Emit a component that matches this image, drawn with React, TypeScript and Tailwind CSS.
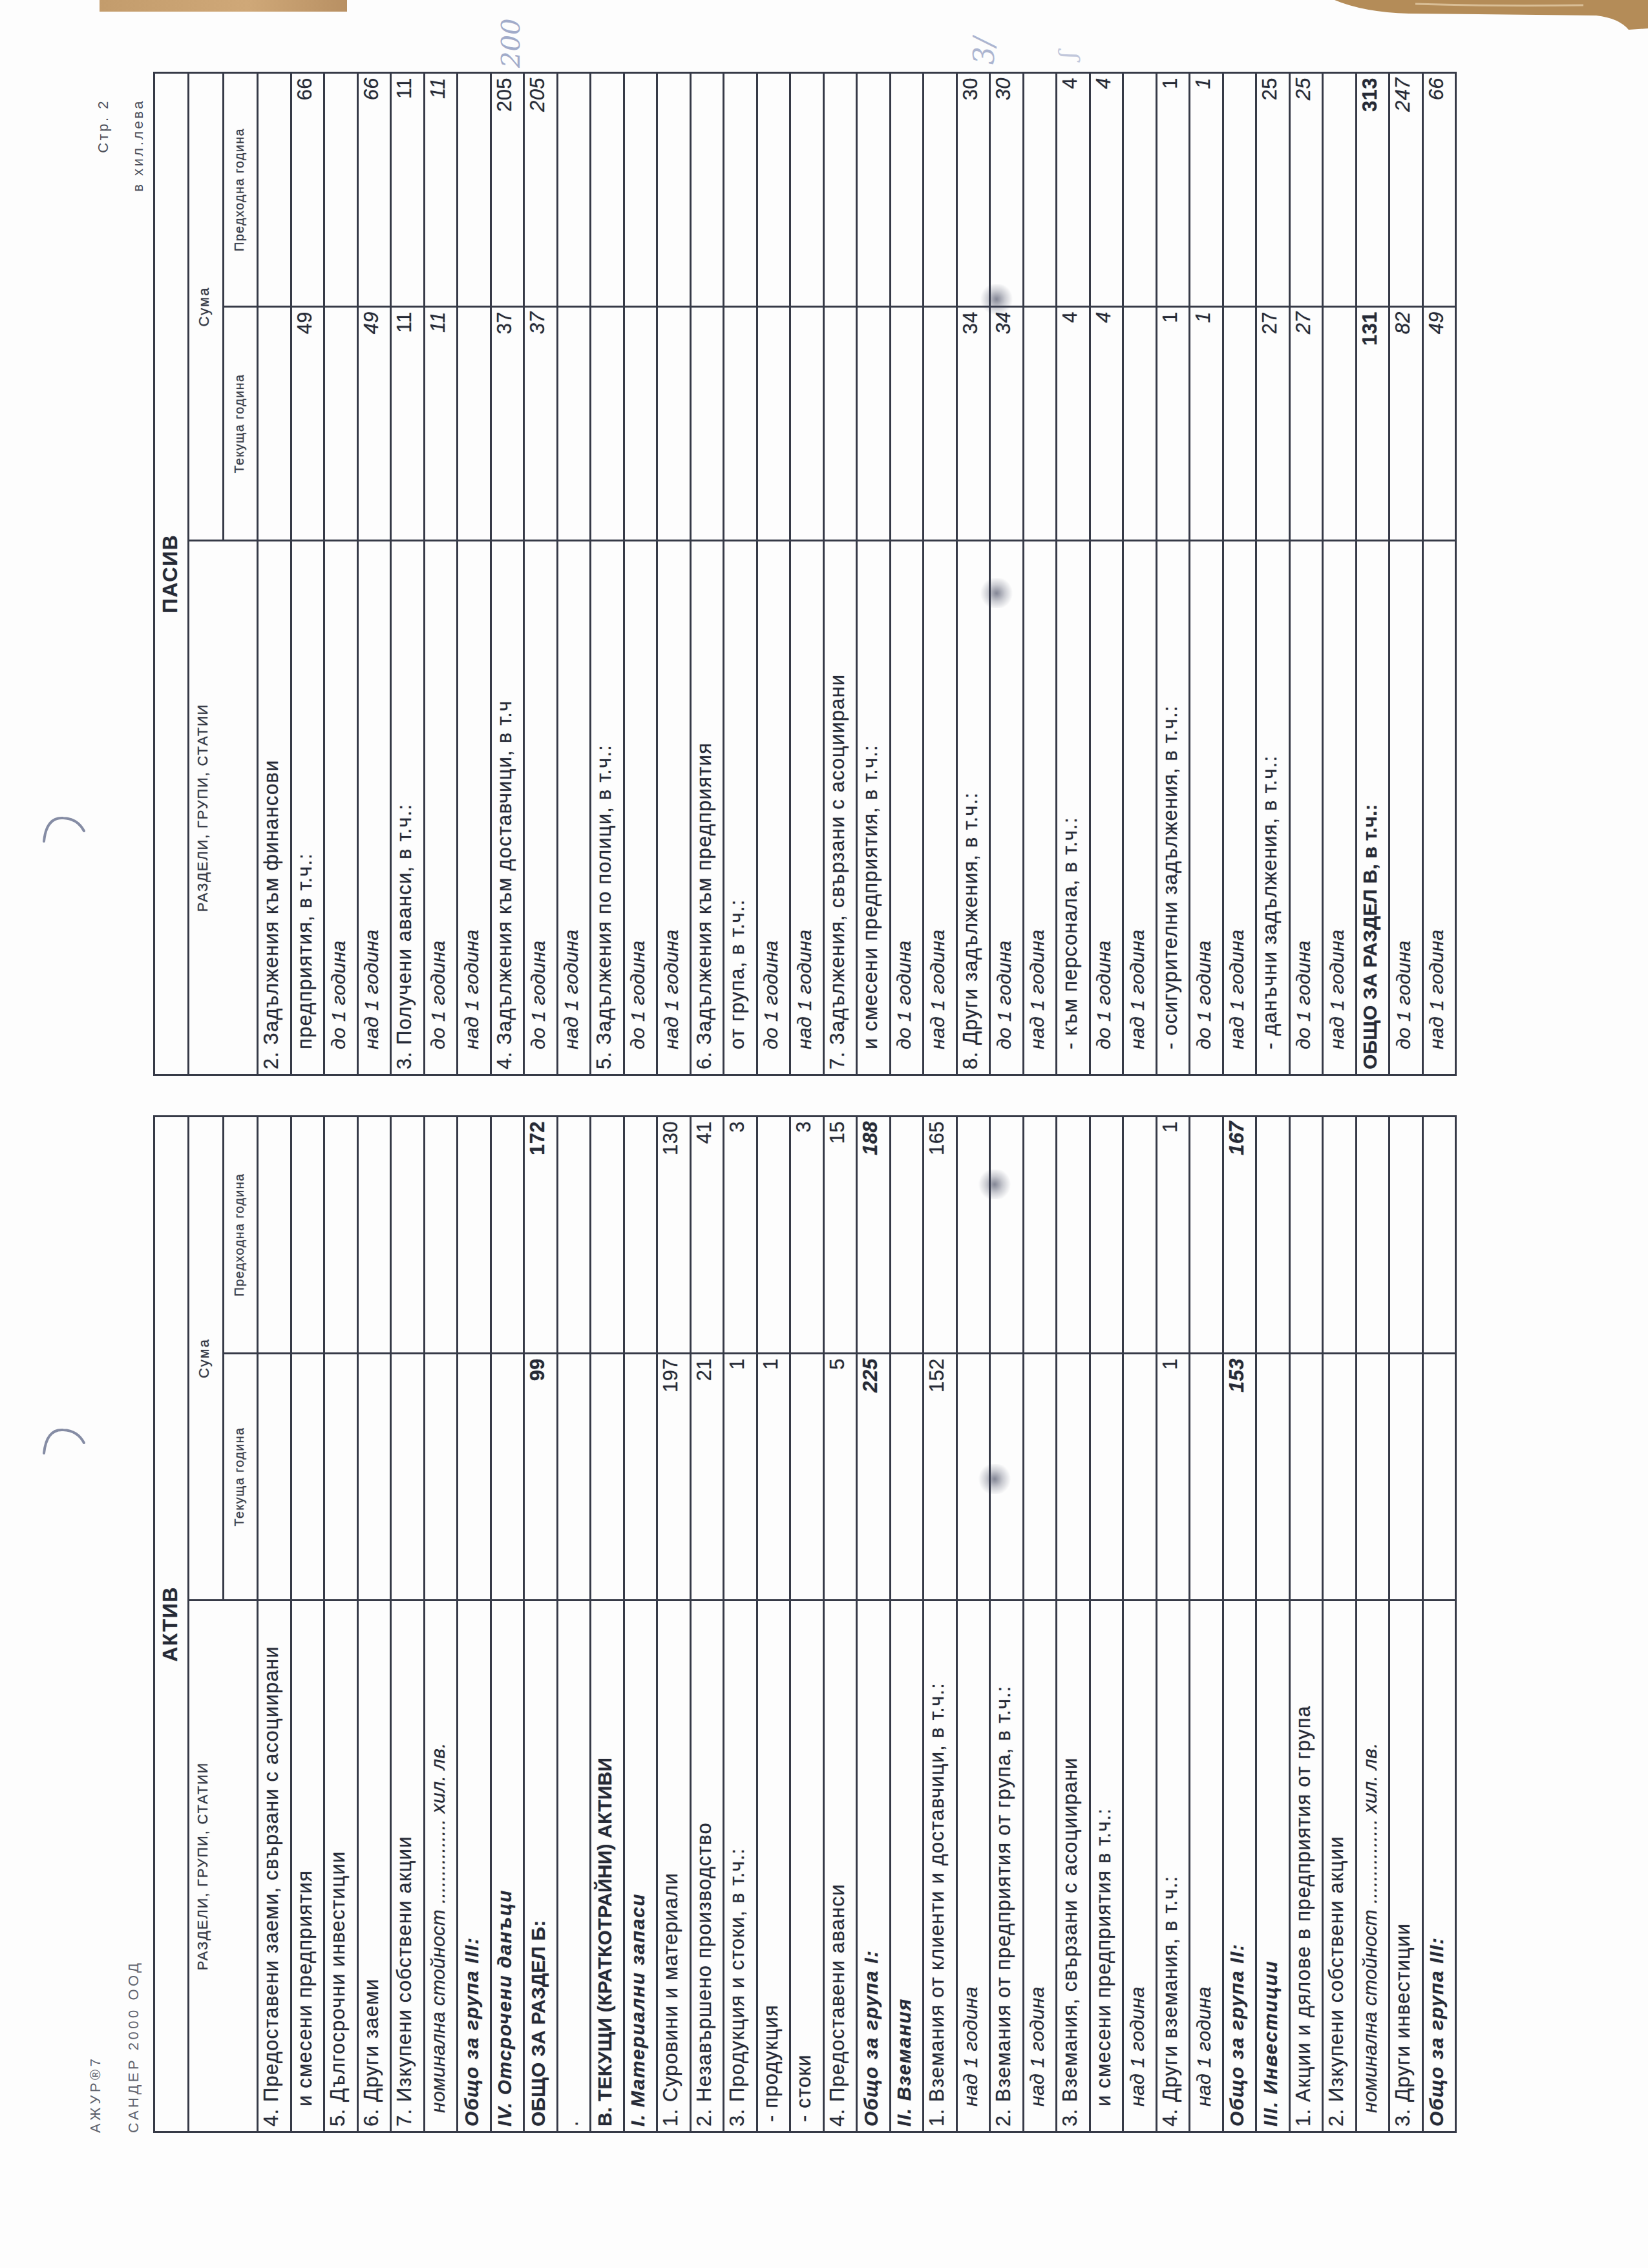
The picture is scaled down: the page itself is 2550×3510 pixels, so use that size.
import React from 'react';

type Style = 'n' | 'i' | 'b' | 'bi';
type Row = { t: string; s?: Style; pad?: string; c?: string; p?: string };

const LINE = 'border-[#363a47]';

const TXT: Record<Style, string> = {
    n: 'text-[31px] font-normal not-italic tracking-[1.2px]',
    i: 'text-[30px] font-normal italic tracking-[0.4px]',
    b: 'text-[30px] font-bold not-italic tracking-[0.2px]',
    bi: 'text-[30px] font-bold italic tracking-[1.6px]',
};

const NUM: Record<Style, string> = {
    n: 'font-normal not-italic',
    i: 'font-normal italic',
    b: 'font-bold not-italic',
    bi: 'font-bold italic',
};

const IN = 'pl-[38px]';
const NOM = 'pl-[28px]';
const DASH = 'pl-[14px]';
const NOMINAL = 'номинална стойност ............... хил. лв.';

const aktiv: Row[] = [
    { t: '4. Предоставени заеми, свързани с асоциирани' },
    { t: 'и смесени предприятия', pad: IN },
    { t: '5. Дългосрочни инвестиции' },
    { t: '6. Други заеми' },
    { t: '7. Изкупени собствени акции' },
    { t: NOMINAL, s: 'i', pad: NOM },
    { t: 'Общо за група III:', s: 'bi' },
    { t: 'IV. Отсрочени данъци', s: 'bi' },
    { t: 'ОБЩО ЗА РАЗДЕЛ Б:', s: 'b', c: '99', p: '172' },
    { t: '.' },
    { t: 'В. ТЕКУЩИ (КРАТКОТРАЙНИ) АКТИВИ', s: 'b' },
    { t: 'I. Материални запаси', s: 'bi' },
    { t: '1. Суровини и материали', c: '197', p: '130' },
    { t: '2. Незавършено производство', c: '21', p: '41' },
    { t: '3. Продукция и стоки, в т.ч.:', c: '1', p: '3' },
    { t: '- продукция', pad: DASH, c: '1' },
    { t: '- стоки', pad: DASH, p: '3' },
    { t: '4. Предоставени аванси', c: '5', p: '15' },
    { t: 'Общо за група I:', s: 'bi', c: '225', p: '188' },
    { t: 'II. Вземания', s: 'bi' },
    { t: '1. Вземания от клиенти и доставчици, в т.ч.:', c: '152', p: '165' },
    { t: 'над 1 година', s: 'i', pad: IN },
    { t: '2. Вземания от предприятия от група, в т.ч.:' },
    { t: 'над 1 година', s: 'i', pad: IN },
    { t: '3. Вземания, свързани с асоциирани' },
    { t: 'и смесени предприятия в т.ч.:', pad: IN },
    { t: 'над 1 година', s: 'i', pad: IN },
    { t: '4. Други вземания, в т.ч.:', c: '1', p: '1' },
    { t: 'над 1 година', s: 'i', pad: IN },
    { t: 'Общо за група II:', s: 'bi', c: '153', p: '167' },
    { t: 'III. Инвестиции', s: 'bi' },
    { t: '1. Акции и дялове в предприятия от група' },
    { t: '2. Изкупени собствени акции' },
    { t: NOMINAL, s: 'i', pad: NOM },
    { t: '3. Други инвестиции' },
    { t: 'Общо за група III:', s: 'bi' },
];

const pasiv: Row[] = [
    { t: '2. Задължения към финансови' },
    { t: 'предприятия, в т.ч.:', pad: IN, c: '49', p: '66' },
    { t: 'до 1 година', s: 'i', pad: IN },
    { t: 'над 1 година', s: 'i', pad: IN, c: '49', p: '66' },
    { t: '3. Получени аванси, в т.ч.:', c: '11', p: '11' },
    { t: 'до 1 година', s: 'i', pad: IN, c: '11', p: '11' },
    { t: 'над 1 година', s: 'i', pad: IN },
    { t: '4. Задължения към доставчици, в т.ч', c: '37', p: '205' },
    { t: 'до 1 година', s: 'i', pad: IN, c: '37', p: '205' },
    { t: 'над 1 година', s: 'i', pad: IN },
    { t: '5. Задължения по полици, в т.ч.:' },
    { t: 'до 1 година', s: 'i', pad: IN },
    { t: 'над 1 година', s: 'i', pad: IN },
    { t: '6. Задължения към предприятия' },
    { t: 'от група, в т.ч.:', pad: IN },
    { t: 'до 1 година', s: 'i', pad: IN },
    { t: 'над 1 година', s: 'i', pad: IN },
    { t: '7. Задължения, свързани с асоциирани' },
    { t: 'и смесени предприятия, в т.ч.:', pad: IN },
    { t: 'до 1 година', s: 'i', pad: IN },
    { t: 'над 1 година', s: 'i', pad: IN },
    { t: '8. Други задължения, в т.ч.:', c: '34', p: '30' },
    { t: 'до 1 година', s: 'i', pad: IN, c: '34', p: '30' },
    { t: 'над 1 година', s: 'i', pad: IN },
    { t: '- към персонала, в т.ч.:', pad: IN, c: '4', p: '4' },
    { t: 'до 1 година', s: 'i', pad: IN, c: '4', p: '4' },
    { t: 'над 1 година', s: 'i', pad: IN },
    { t: '- осигурителни задължения, в т.ч.:', pad: IN, c: '1', p: '1' },
    { t: 'до 1 година', s: 'i', pad: IN, c: '1', p: '1' },
    { t: 'над 1 година', s: 'i', pad: IN },
    { t: '- данъчни задължения, в т.ч.:', pad: IN, c: '27', p: '25' },
    { t: 'до 1 година', s: 'i', pad: IN, c: '27', p: '25' },
    { t: 'над 1 година', s: 'i', pad: IN },
    { t: 'ОБЩО ЗА РАЗДЕЛ В, в т.ч.:', s: 'b', c: '131', p: '313' },
    { t: 'до 1 година', s: 'i', pad: IN, c: '82', p: '247' },
    { t: 'над 1 година', s: 'i', pad: IN, c: '49', p: '66' },
];

function Sheet({ title, rows, width, labelW, curW }: { title: string; rows: Row[]; width: string; labelW: string; curW: string }) {
    return (
        <div className={`${width} border-[3px] ${LINE} flex flex-col text-[#262a36] [text-shadow:0_0_1px_rgba(30,34,50,0.55)]`}>
            <div className={`h-[53px] border-b-[3px] ${LINE} flex items-center justify-center pb-[5px] text-[32px] font-bold tracking-[1.5px]`}>
                {title}
            </div>
            <div className={`h-[107px] border-b-[3px] ${LINE} flex`}>
                <div className={`${labelW} border-r-[3px] ${LINE} flex justify-center pt-[7px] text-[22px] leading-[28px] tracking-[1.8px] text-[#343844]`}>
                    РАЗДЕЛИ, ГРУПИ, СТАТИИ
                </div>
                <div className="flex-1 flex flex-col">
                    <div className={`h-[54px] border-b-[3px] ${LINE} flex items-center justify-center pb-[6px] text-[22px] tracking-[2px] text-[#343844]`}>
                        Сума
                    </div>
                    <div className="flex-1 flex text-[20px] tracking-[1.3px] text-[#383c48]">
                        <div className={`${curW} border-r-[3px] ${LINE} flex items-center justify-center pb-[4px]`}>Текуща година</div>
                        <div className="flex-1 flex items-center justify-center pb-[4px]">Предходна година</div>
                    </div>
                </div>
            </div>
            {rows.map((r, i) => {
                const s = r.s ?? 'n';
                const last = i === rows.length - 1;
                return (
                    <div key={i} className={last ? 'h-[48.5px] flex' : `h-[51.5px] border-b-[3px] ${LINE} flex`}>
                        <div className={`${labelW} ${r.pad ?? 'pl-[7px]'} border-r-[3px] ${LINE} flex items-center pb-[8px] whitespace-nowrap ${TXT[s]}`}>
                            {r.t}
                        </div>
                        <div className={`${curW} border-r-[3px] ${LINE} flex items-center justify-end pr-[6px] pb-[8px] text-[31px] tracking-[0.4px] ${NUM[s]}`}>
                            {r.c}
                        </div>
                        <div className={`flex-1 flex items-center justify-end pr-[6px] pb-[8px] text-[31px] tracking-[0.4px] ${NUM[s]}`}>{r.p}</div>
                    </div>
                );
            })}
        </div>
    );
}

function Arc({ top }: { top: string }) {
    return (
        <svg className={`absolute left-[60px] ${top} w-[80px] h-[50px]`} viewBox="0 0 80 50">
            <path d="M8 44 Q12 6 38 8 Q60 9 70 28" fill="none" stroke="#5c6586" strokeWidth="4" strokeLinecap="round" opacity="0.75" />
        </svg>
    );
}

function Speck({ pos }: { pos: string }) {
    return (
        <div className={`absolute ${pos} w-[58px] h-[46px] rounded-full bg-[radial-gradient(circle,rgba(50,55,80,0.6)_0%,rgba(50,55,80,0.25)_35%,transparent_68%)]`} />
    );
}

export default function App() {
    return (
        <div className="relative w-[2550px] h-[3510px] overflow-hidden bg-[#fdfdfd] font-['Liberation_Sans',Arial,sans-serif]">
            {/* landscape page, turned as in the scan */}
            <div className="absolute left-0 top-0 w-[3510px] h-[2550px] origin-top-left -rotate-90 translate-y-[3510px] pl-[209px] pt-[133px]">
                <div className="w-[3148px] h-[104px] flex justify-between text-[22px] leading-[30px]">
                    <div className="flex flex-col gap-[29px] tracking-[4.5px] text-[#5f636d]">
                        <span>АЖУР®7</span>
                        <span>САНДЕР 2000 ООД</span>
                    </div>
                    <div className="mt-[12px] flex flex-col items-end gap-[24px] tracking-[3.5px] text-[#4c505a]">
                        <span>Стр. 2</span>
                        <span>в хил.лева</span>
                    </div>
                </div>
                <div className="flex items-start gap-[61px]">
                    <Sheet title="АКТИВ" rows={aktiv} width="w-[1575px]" labelW="w-[823px]" curW="w-[382px]" />
                    <Sheet title="ПАСИВ" rows={pasiv} width="w-[1554px]" labelW="w-[827px]" curW="w-[362px]" />
                </div>
                {/* pen marks in the margin */}
                <span className="absolute left-[3405px] top-[760px] font-['DejaVu_Serif',serif] italic text-[40px] text-[#8b97bd] opacity-80">200</span>
                <span className="absolute left-[3410px] top-[1490px] font-['DejaVu_Serif',serif] italic text-[44px] text-[#8b97bd] opacity-70">3/</span>
                <span className="absolute left-[3420px] top-[1625px] font-['DejaVu_Serif',serif] italic text-[36px] text-[#9aa4c6] opacity-60">ʃ</span>
            </div>

            {/* scan artefacts */}
            <div className="absolute left-[154px] top-0 w-[383px] h-[18px] bg-[linear-gradient(90deg,#c39c6c,#cfa878_60%,#b89063)]" />
            <svg className="absolute left-[2050px] top-0 w-[500px] h-[50px]" viewBox="0 0 500 50">
                <path d="M15 0 L500 0 L500 44 L470 46 Q455 28 420 24 L130 21 Q60 19 15 0 Z" fill="#b48c58" />
                <path d="M140 6 Q260 10 400 8" fill="none" stroke="#e8d3b0" strokeWidth="3" opacity="0.7" />
            </svg>
            <Arc top="top-[1258px]" />
            <Arc top="top-[2205px]" />
            <Speck pos="left-[1513px] top-[440px]" />
            <Speck pos="left-[1513px] top-[895px]" />
            <Speck pos="left-[1510px] top-[1810px]" />
            <Speck pos="left-[1510px] top-[2266px]" />
        </div>
    );
}
